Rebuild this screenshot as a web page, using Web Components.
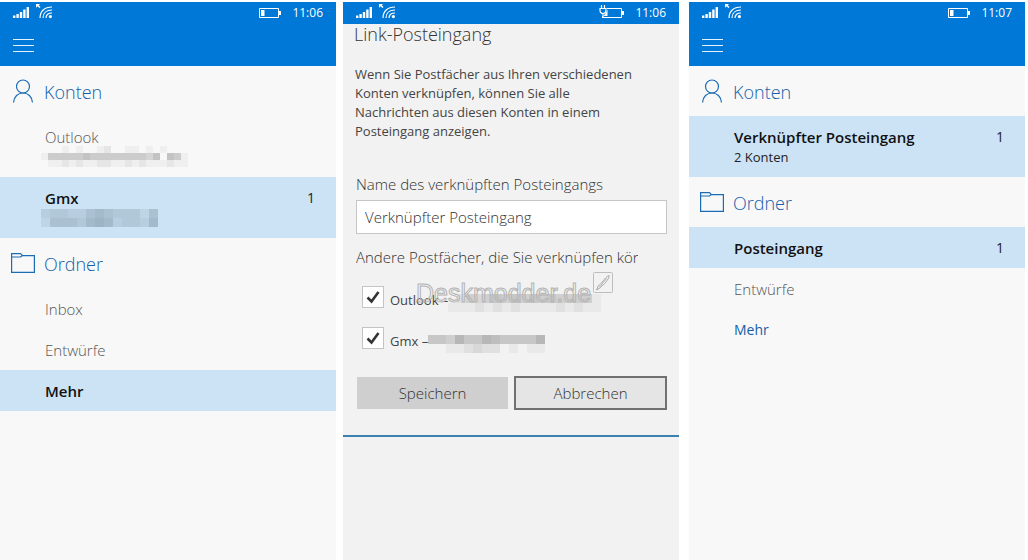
<!DOCTYPE html>
<html lang="de">
<head>
<meta charset="utf-8">
<title>Outlook Mail – Link-Posteingang</title>
<style>
  html, body { margin: 0; }
  body {
    background: #fff;
    font-family: "Open Sans", "Noto Sans", sans-serif;
    color: #444;
  }
</style>
</head>
<body>
<mail-gallery></mail-gallery>

<script>
const define = (name, html, setup) => {
  const template = document.createElement('template');
  template.innerHTML = html;
  customElements.define(name, class extends HTMLElement {
    connectedCallback() {
      if (this.shadowRoot) return;
      const root = this.attachShadow({ mode: 'open' });
      root.append(template.content.cloneNode(true));
      if (setup) setup(this, root);
    }
  });
};

/* Obscured address: rows of digits, 0 = clear, 9 = darkest cell */
define('pixel-mosaic', `
  <style>
    :host { display: block; flex: none; }
    svg { display: block; }
  </style>
  <svg aria-hidden="true" shape-rendering="crispEdges"></svg>`,
  (host, root) => {
    const rows = host.getAttribute('cells').split(' ');
    const size = Number(host.getAttribute('size'));
    const tone = host.getAttribute('tone') || '#000';
    const svg = root.querySelector('svg');
    svg.setAttribute('width', rows[0].length * size);
    svg.setAttribute('height', rows.length * size);
    svg.innerHTML = rows.map((row, y) => [...row].map((level, x) =>
      level === '0' ? '' :
      `<rect x="${x * size}" y="${y * size}" width="${size}" height="${size}" fill="${tone}" fill-opacity="${level * 0.035}"/>`
    ).join('')).join('');
  });

define('status-bar', `
  <style>
    :host { display: block; background: #0078d7; color: #fff; }
    div { display: flex; align-items: center; height: 22px; padding: 0 13px; }
    svg { display: block; flex: none; }
    .wifi { margin-left: 6px; }
    .battery { margin-left: auto; }
    time { margin-left: 10px; font-size: 12px; line-height: 20px; }
    .plug { display: none; }
    :host([charging]) .plug { display: block; }
  </style>
  <div>
    <svg width="17" height="22" viewBox="0 0 17 22" fill="#fff" aria-hidden="true">
      <path d="M0 13.5h2.4V16H0zM3.4 12h2.4v4H3.4zM6.8 10h2.4v6H6.8zM10.2 7.5h2.4V16h-2.4zM13.6 5H16v11h-2.4z"/>
    </svg>
    <svg class="wifi" width="17" height="22" viewBox="0 0 17 22" fill="none" stroke="#fff" stroke-width="1.2" aria-hidden="true">
      <path d="M4 16C4 9.400 8.500 5 16 5M7 16c0-5 3.500-8 9-8M10 16c0-3.200 2.300-5 6-5"/>
      <circle cx="14.400" cy="14.600" r="1.600" fill="#fff" stroke="none"/>
      <path d="M0 2h4L2.700 3.300 4.500 5 3.500 6 1.500 4.300 0 5.800z" fill="#fff" stroke="none"/>
    </svg>
    <svg class="battery" width="26" height="22" viewBox="0 0 26 22" fill="none" stroke="#fff" aria-hidden="true">
      <path d="M3.500 6.500h19v9h-19z"/>
      <path d="M24 9v4" stroke-width="2"/>
      <path d="M5 8h3.500v6H5z" fill="#fff" stroke="none"/>
      <g class="plug">
        <path d="M0 3h8v9H6l-1 2H0z" fill="#0078d7" stroke="none"/>
        <path d="M2.500 3v3M5.500 3v3M1 6.500h6v2c0 4-6 4-6 0zM4 11.500V16" stroke-width="1.200"/>
        <path d="M5 14l3-5v5z" fill="#fff" stroke="none"/>
      </g>
    </svg>
    <time></time>
  </div>`,
  (host, root) => {
    root.querySelector('time').textContent = host.getAttribute('time');
  });

define('app-bar', `
  <style>
    :host { display: flex; align-items: center; height: 42px; padding: 0 13px; background: #0078d7; }
    button { display: block; margin: 0; padding: 0; border: 0; background: none; }
    svg { display: block; }
  </style>
  <button type="button" aria-label="Menü">
    <svg width="22" height="14" viewBox="0 0 22 14" stroke="#fff" stroke-opacity=".9" aria-hidden="true">
      <path d="M0 1.500h21M0 7.500h21M0 13.500h21"/>
    </svg>
  </button>`);

define('nav-section', `
  <style>
    :host { display: block; }
    h2 {
      display: flex; align-items: center; height: 50px; margin: 0; padding-left: 11px;
      color: #1460a8; font-size: 18px; font-weight: 300; line-height: 24px;
    }
    span { padding-top: 2px; }
    svg { display: none; width: 25px; height: 26px; margin-right: 8px; fill: none; stroke: #1b6cb4; stroke-width: 1.200; }
    :host([icon="person"]) .person, :host([icon="folder"]) .folder { display: block; }
  </style>
  <h2>
    <svg class="person" viewBox="0 0 25 26" aria-hidden="true">
      <circle cx="12" cy="8.500" r="6.500"/>
      <path d="M2.500 24.500C3 18.500 7 15 12 15s9 3.500 9.500 9.500"/>
    </svg>
    <svg class="folder" viewBox="0 0 25 26" aria-hidden="true">
      <path d="M.600 22.400V3.600H9.500L11.500 5.600H23.400V22.400zM.600 7H9.500L11.500 5.600"/>
    </svg>
    <span></span>
  </h2>
  <slot></slot>`,
  (host, root) => {
    root.querySelector('span').textContent = host.getAttribute('heading');
  });

define('nav-item', `
  <style>
    :host { display: block; font-size: 15px; font-weight: 300; line-height: 20px; color: #555; }
    a {
      display: flex; box-sizing: border-box; min-height: 41px; padding: 11px 21px 10px 45px;
      color: inherit; text-decoration: none;
    }
    .body { flex: 1; min-width: 0; }
    .title { display: block; }
    ::slotted([slot="detail"]) { display: flex; align-items: center; height: 19px; font-size: 13px; font-weight: 400; color: #222; }
    .count { color: #222; font-size: 14px; font-weight: 400; }
    :host([selected]) a { background: #cce3f5; }
    :host([selected]) .title { color: #111; font-weight: 600; }
    :host([detailed]) a { padding-bottom: 11px; }
    :host([accent]) { color: #1460a8; font-size: 14px; font-weight: 400; }
  </style>
  <a href="#">
    <span class="body"><span class="title"><slot></slot></span><slot name="detail"></slot></span>
    <span class="count"></span>
  </a>`,
  (host, root) => {
    root.querySelector('.count').textContent = host.getAttribute('count') || '';
  });

define('check-row', `
  <style>
    :host { display: block; }
    label { display: flex; align-items: center; height: 22px; font-size: 13px; line-height: 22px; white-space: nowrap; }
    input {
      appearance: none; flex: none; width: 22px; height: 22px; margin: 0 6px 0 0;
      border: 1px solid #c4c4c4; background: #fff;
    }
    input:checked {
      background: #fff url("data:image/svg+xml,%3Csvg xmlns='http://www.w3.org/2000/svg' viewBox='0 0 20 20'%3E%3Cpath d='M4.500 10.500l4 4L15.500 5' fill='none' stroke='%23333' stroke-width='2.600'/%3E%3C/svg%3E") center / 20px 20px no-repeat;
    }
    span { display: flex; align-items: center; padding-top: 5px; }
    ::slotted(pixel-mosaic) { margin-top: 6px; }
  </style>
  <label><input type="checkbox" checked><span><slot></slot></span></label>`);

define('site-watermark', `
  <style>
    :host { display: flex; align-items: flex-start; pointer-events: none; }
    span {
      font: 25px/34px "Liberation Sans", sans-serif;
      color: transparent; -webkit-text-stroke: 1px #b4b4b4;
    }
    svg { display: block; margin: -4px 0 0 2px; }
  </style>
  <span>Deskmodder.de</span>
  <svg width="21" height="22" viewBox="0 0 21 22" fill="none" stroke="#bdbdbd" aria-hidden="true">
    <rect x=".500" y=".500" width="19" height="20" rx="1" fill="#f2f2f2" fill-opacity=".6"/>
    <path d="M3.500 18L5.500 13.500C8 12.500 8 10 10 9.500C11.500 7 14 4 16 3.500C16.500 5.500 14.500 8 12.500 10.500C11.500 12.500 9 13 7.500 15.500z" stroke="#a8a8a8"/>
    <path d="M6.500 15L13.500 6.500" stroke="#b4b4b4"/>
  </svg>`);

define('link-form', `
  <style>
    :host { display: block; position: relative; border-bottom: 2px solid #3c7fb1; }
    form { display: flex; flex-direction: column; margin: 0; padding: 0 12px 25px 13px; }
    h1 { margin: 0 0 21px -2px; color: #333; font-size: 18px; font-weight: 300; line-height: 20px; }
    p { max-width: 290px; margin: 0 0 33px -1px; font-size: 13px; line-height: 19px; }
    .label { color: #333; font-size: 15px; font-weight: 300; line-height: 20px; }
    .field { display: flex; flex-direction: column; gap: 6px; }
    input {
      box-sizing: border-box; width: 100%; height: 34px; margin: 0; padding: 0 8px;
      border: 1px solid #c6c6c6; background: #fff; color: #333;
      font: 300 15px/20px "Open Sans", "Noto Sans", sans-serif;
    }
    fieldset { min-width: 0; margin: 13px 0 27px; padding: 0; border: 0; }
    legend { display: block; box-sizing: border-box; width: 100%; padding: 0 29px 0 0; margin-bottom: 19px; }
    legend span { display: block; overflow: hidden; white-space: nowrap; }
    .checks { display: flex; flex-direction: column; gap: 19px; padding-left: 6px; }
    .actions { display: grid; grid-template-columns: 1fr 1fr; gap: 5px; }
    button {
      box-sizing: border-box; height: 34px; margin: 0; padding: 0; color: #333;
      font: 300 15px/20px "Open Sans", "Noto Sans", sans-serif;
    }
    .save { border: 1px solid #f2f2f2; background: #cfcfcf; }
    .cancel { border: 2px solid #707070; background: #e5e5e5; }
    site-watermark { position: absolute; left: 73px; top: 252px; }
  </style>
  <form onsubmit="return false">
    <h1>Link-Posteingang</h1>
    <p>Wenn Sie Postfächer aus Ihren verschiedenen Konten verknüpfen, können Sie alle Nachrichten aus diesen Konten in einem Posteingang anzeigen.</p>
    <div class="field">
      <label class="label" for="name">Name des verknüpften Posteingangs</label>
      <input id="name" type="text" value="Verknüpfter Posteingang">
    </div>
    <fieldset>
      <legend class="label"><span>Andere Postfächer, die Sie verknüpfen können</span></legend>
      <div class="checks">
        <check-row>Outlook –<pixel-mosaic size="9" cells="02434545454544441 11121212111121211"></pixel-mosaic></check-row>
        <check-row>Gmx –<pixel-mosaic size="9" cells="5547557655557 0011232201011"></pixel-mosaic></check-row>
      </div>
    </fieldset>
    <div class="actions">
      <button class="save" type="submit">Speichern</button>
      <button class="cancel" type="button">Abbrechen</button>
    </div>
  </form>
  <site-watermark></site-watermark>`);

define('phone-screen', `
  <style>
    :host { display: flex; flex-direction: column; min-width: 0; background: #f8f8f8; }
    :host([dialog]) { background: #f2f2f2; }
  </style>
  <slot></slot>`);

define('mail-gallery', `
  <style>
    :host {
      display: grid; grid-template-columns: 1fr 7px 1fr 10px 1fr;
      box-sizing: border-box; min-height: 100vh; padding: 2px 3px 0 0;
    }
    phone-screen:nth-of-type(2) { grid-column: 3; }
    phone-screen:nth-of-type(3) { grid-column: 5; }
    pixel-mosaic { margin-left: -4px; }
  </style>
  <phone-screen>
    <status-bar time="11:06"></status-bar>
    <app-bar></app-bar>
    <nav-section icon="person" heading="Konten">
      <nav-item detailed>Outlook<pixel-mosaic slot="detail" size="7" cells="000101001200110101000 155555655555555460651 011212112211212111211"></pixel-mosaic></nav-item>
      <nav-item detailed selected count="1">Gmx<pixel-mosaic slot="detail" size="9" tone="#102030" cells="3443356544425 2555467634436"></pixel-mosaic></nav-item>
    </nav-section>
    <nav-section icon="folder" heading="Ordner">
      <nav-item>Inbox</nav-item>
      <nav-item>Entwürfe</nav-item>
      <nav-item selected>Mehr</nav-item>
    </nav-section>
  </phone-screen>
  <phone-screen dialog>
    <status-bar time="11:06" charging></status-bar>
    <link-form></link-form>
  </phone-screen>
  <phone-screen>
    <status-bar time="11:07"></status-bar>
    <app-bar></app-bar>
    <nav-section icon="person" heading="Konten">
      <nav-item detailed selected count="1">Verknüpfter Posteingang<span slot="detail">2 Konten</span></nav-item>
    </nav-section>
    <nav-section icon="folder" heading="Ordner">
      <nav-item selected count="1">Posteingang</nav-item>
      <nav-item>Entwürfe</nav-item>
      <nav-item accent>Mehr</nav-item>
    </nav-section>
  </phone-screen>`);
</script>
</body>
</html>
